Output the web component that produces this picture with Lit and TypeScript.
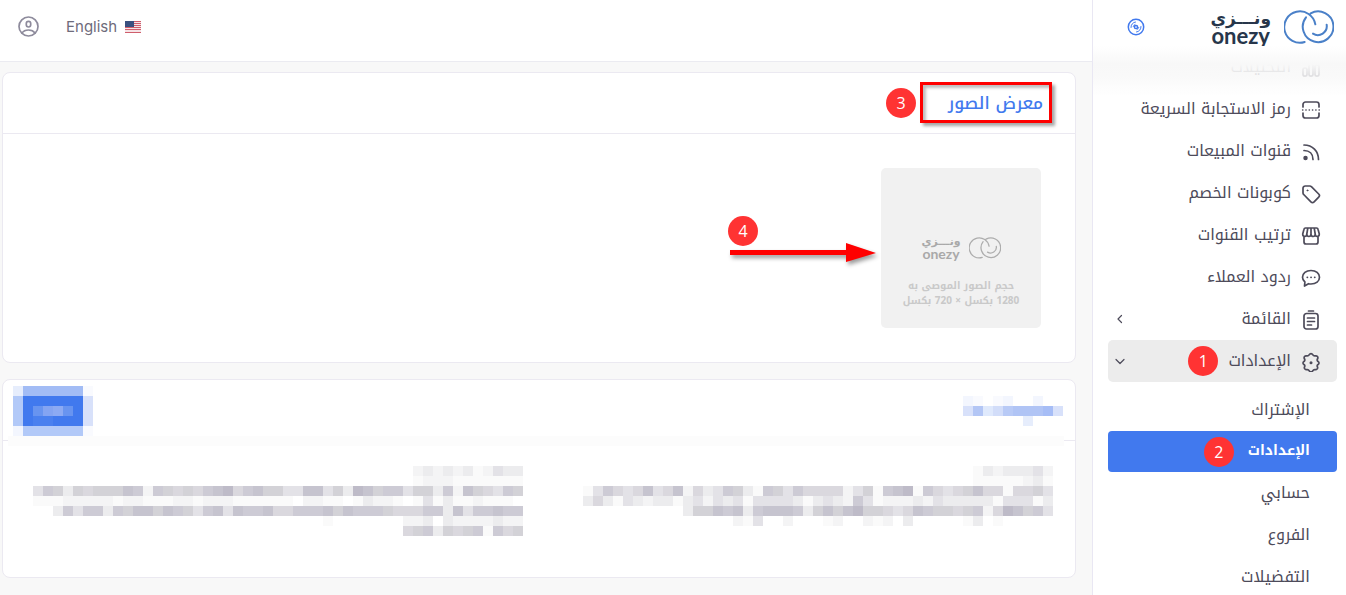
import { LitElement, html, svg, css } from "lit";
import { customElement, property } from "lit/decorators.js";

const GREYS: Record<string, string> = {
  "1": "#fafafa",
  "2": "#f4f4f5",
  "3": "#ececee",
  "4": "#e3e2e7",
  "5": "#dad8de",
  "6": "#d3d2d7",
  "7": "#cdcbd5",
  "8": "#c6c4cf",
  "9": "#bebbc8",
};

const BLUES: Record<string, string> = {
  a: "#f3f6fe",
  b: "#f9fafe",
  c: "#d8e1fa",
  d: "#b3c6f5",
  e: "#dfe9fc",
  f: "#d2ddf9",
  g: "#b8caf6",
  h: "#b0c4f5",
  i: "#a6bdf6",
  j: "#e6edfc",
  k: "#a2bcf5",
  l: "#b2c9f8",
  m: "#4179ee",
  n: "#6894f0",
  o: "#84a4f2",
  p: "#8caaf3",
  q: "#4a80ef",
};

const TITLE_CELLS = ["ab.ba..a..", "cdefghhhic", "......j..."];
const BUTTON_CELLS = ["jkkkkkkb", "lmmmmmmc", "lmnopnmc", "lmqqmmmc", "allllllb"];

const RIGHT_CELLS = [
  ".......................................13233342",
  ".......................................11111231",
  "14754584582534763176475555246178917545685515564",
  "35314323313424341444431343274122232433333144413",
  "..........3668783788873686896654587665672598674",
  "...............214..2...12..212.3.....13.1.....",
];

const LEFT_CELLS = [
  "......................................23232312433",
  "......................................12221111111",
  "4763656668727656578957866448846398677466372865476",
  "11122222122111221222111111.2211.13221.1413112111",
  "..37477376886876478487785577786877765557738477877",
  ".............................1.......223.32222322",
  ".....................................567365671756",
];

type IconName = keyof typeof ICONS;

const ICONS = {
  chart: svg`<rect x="2" y="10" width="4" height="8" rx="1.500"/><rect x="8" y="4" width="4" height="14" rx="1.500"/><rect x="14" y="7" width="4" height="11" rx="1.500"/>`,
  scan: svg`<path d="M2 7V4.500a2.500 2.500 0 0 1 2.500-2.500h11a2.500 2.500 0 0 1 2.500 2.500V7M2 13v2.500a2.500 2.500 0 0 0 2.500 2.500h11a2.500 2.500 0 0 0 2.500-2.500V13"/><path d="M1.500 10h17" stroke-width="1.300" stroke-dasharray=".4 2.900"/>`,
  feed: svg`<path d="M3 3c8.500 0 14.500 6 14.500 14.500M3 8.500c5.500 0 9 3.500 9 9"/><circle cx="4.500" cy="16" r="1.400" fill="currentColor"/>`,
  tag: svg`<path d="M2 4.200A2.200 2.200 0 0 1 4.200 2h4.600c.6 0 1.200.2 1.600.7l7.300 7.300c.9.900.9 2.300 0 3.200l-4.600 4.600c-.9.900-2.300.9-3.200 0L2.700 10.500c-.5-.4-.7-1-.7-1.600z"/><circle cx="6.400" cy="6.400" r=".5" fill="currentColor" stroke-width="1"/>`,
  store: svg`<path d="M3 10v6a2 2 0 0 0 2 2h10a2 2 0 0 0 2-2v-6M4.500 2h11a1.500 1.500 0 0 1 1.500 1.200l1.300 4.800c0 3.300-4.100 3.300-4.100 0 0 3.300-4.200 3.300-4.200 0 0 3.300-4.200 3.300-4.200 0 0 3.300-4.100 3.300-4.100 0L3 3.200A1.500 1.500 0 0 1 4.500 2zM5.800 8 6.800 2M10 8V2M14.200 8 13.200 2"/>`,
  chat: svg`<path d="M10 2.500c5 0 8.500 2.900 8.500 6.800S15 16 10 16c-.9 0-1.700-.1-2.500-.3L3.500 18l.4-4C2.400 12.800 1.500 11.200 1.500 9.300c0-3.900 3.500-6.800 8.500-6.800z"/><path d="M6.300 9.300h.1M10 9.300h.1M13.700 9.300h.1" stroke-width="1.800"/>`,
  list: svg`<rect x="3" y="3.500" width="14" height="15.500" rx="2.500"/><path d="M7.500 1h5M6.500 8h7M6.500 11.500h7M6.500 15h4"/>`,
  gear: svg`<path d="M8.300 2.600a1.900 1.900 0 0 1 3.400 0c.5 1 1.500 1.500 2.600 1.300a2 2 0 0 1 2.300 2.900c-.6.900-.5 1.700 0 2.300.4.500 1.400.5 1.400 1.900s-1 1.400-1.400 1.900c-.5.600-.6 1.400 0 2.300a2 2 0 0 1-2.300 2.400c-1.100-.2-2.100.3-2.600 1.200a1.900 1.900 0 0 1-3.400 0c-.5-.9-1.500-1.400-2.600-1.200a2 2 0 0 1-2.300-2.400c.6-.9.5-1.700 0-2.300C3 12.400 2 12.400 2 11s1-1.400 1.400-1.900c.5-.6.6-1.400 0-2.300a2 2 0 0 1 2.300-2.900c1.100.2 2.100-.3 2.600-1.300z"/><circle cx="10" cy="10.800" r="1.500" fill="currentColor" stroke="none"/>`,
};

@customElement("pixel-block")
class PixelBlock extends LitElement {
  @property({ attribute: false }) rows: string[] = [];

  static styles = css`
    :host {
      display: block;
      line-height: 0;
    }
  `;

  render() {
    const w = this.rows[0]?.length ?? 0;
    return html`<svg
      width=${w * 10}
      height=${this.rows.length * 10}
      shape-rendering="crispEdges"
      aria-hidden="true"
    >
      ${this.rows.map((row, y) =>
        [...row].map((c, x) => {
          const fill = GREYS[c] ?? BLUES[c];
          return fill
            ? svg`<rect x=${x * 10} y=${y * 10} width="10" height="10" fill=${fill} />`
            : null;
        })
      )}
    </svg>`;
  }
}

@customElement("onezy-logo")
class OnezyLogo extends LitElement {
  static styles = css`
    :host {
      display: flex;
      direction: rtl;
      align-items: center;
      gap: 13px;
      color: #27364b;
      --mark: #4a80c8;
      --mark-width: 50px;
      --ar: 17px;
      --en: 22px;
      --line: 18px;
    }
    :host([small]) {
      gap: 8px;
      color: #a9a9a9;
      --mark: #adadad;
      --mark-width: 32px;
      --ar: 11px;
      --en: 14px;
      --line: 12px;
    }
    .mark {
      width: var(--mark-width);
      fill: none;
      stroke: var(--mark);
      stroke-width: 6;
      stroke-linecap: round;
    }
    .words {
      display: flex;
      flex-direction: column;
      align-items: center;
      line-height: var(--line);
    }
    .ar {
      font-family: "DejaVu Sans", sans-serif;
      font-size: var(--ar);
      font-weight: 700;
    }
    .en {
      font-family: Lato, sans-serif;
      font-size: var(--en);
      font-weight: 700;
    }
  `;

  render() {
    return html`<svg class="mark" viewBox="0 0 150 102" aria-hidden="true">
        <path d="M94 43A47 47 0 1 0 62 96M66 22A46 46 0 1 0 80 10M128 44A27 27 0 0 1 87 71" />
      </svg>
      <span class="words"><span class="ar">ونـــزي</span><span class="en">onezy</span></span>`;
  }
}

const MENU: { icon: IconName; label: string; arrow?: "closed" | "open"; badge?: string }[] = [
  { icon: "chart", label: "التحليلات" },
  { icon: "scan", label: "رمز الاستجابة السريعة" },
  { icon: "feed", label: "قنوات المبيعات" },
  { icon: "tag", label: "كوبونات الخصم" },
  { icon: "store", label: "ترتيب القنوات" },
  { icon: "chat", label: "ردود العملاء" },
  { icon: "list", label: "القائمة", arrow: "closed" },
  { icon: "gear", label: "الإعدادات", arrow: "open", badge: "1" },
];

const SUBMENU: { label: string; badge?: string }[] = [
  { label: "الإشتراك" },
  { label: "الإعدادات", badge: "2" },
  { label: "حسابي" },
  { label: "الفروع" },
  { label: "التفضيلات" },
];

@customElement("app-root")
class AppRoot extends LitElement {
  static styles = css`
    :host {
      display: flex;
      direction: rtl;
      height: 100vh;
      overflow: hidden;
      background: #f8f8f8;
      color: #4d4b5a;
      font-family: "Noto Kufi Arabic", "DejaVu Sans", sans-serif;
      font-size: 16px;
    }
    * {
      box-sizing: border-box;
    }
    a {
      color: inherit;
      text-decoration: none;
    }
    button {
      border: 0;
      padding: 0;
      background: none;
      color: inherit;
      font: inherit;
      cursor: pointer;
    }
    .icon {
      display: block;
      flex: none;
      fill: none;
      stroke: currentColor;
      stroke-width: 1.7;
      stroke-linecap: round;
      stroke-linejoin: round;
    }
    .badge {
      display: grid;
      place-items: center;
      flex: none;
      width: 30px;
      height: 30px;
      border-radius: 50%;
      background: #ff3333;
      color: #fff;
      font: 16px "Open Sans", sans-serif;
    }

    .sidebar {
      flex: none;
      width: 254px;
      border-left: 1px solid #e9e7f3;
      background: #fff;
      overflow: hidden;
    }
    .brand {
      position: relative;
      display: flex;
      align-items: center;
      justify-content: space-between;
      height: 46px;
      padding: 8px 12px 0 34px;
    }
    .brand::after {
      content: "";
      position: absolute;
      top: 46px;
      left: 0;
      right: 0;
      height: 50px;
      background: linear-gradient(
        #fff 0,
        #fbfbfb 10px,
        #f8f8f8 18px,
        rgba(248, 248, 248, 0.85) 30px,
        rgba(255, 255, 255, 0)
      );
      pointer-events: none;
    }
    .pin {
      color: #4179ee;
    }
    .menu {
      display: flex;
      flex-direction: column;
      padding: 0 9px 0 15px;
    }
    .item {
      display: flex;
      align-items: center;
      gap: 10px;
      width: 100%;
      height: 42px;
      padding: 0 16px 0 6px;
      border-radius: 5px;
      text-align: right;
    }
    .label {
      padding-bottom: 2px;
    }
    .item .icon {
      margin-top: 2px;
    }
    .item .chevron {
      margin: 0 auto 0 0;
    }
    .item.open {
      background: #ececec;
    }
    .submenu {
      display: flex;
      flex-direction: column;
      padding-top: 7px;
    }
    .sub {
      display: flex;
      align-items: center;
      gap: 14px;
      height: 42px;
      padding: 0 27px;
      border-radius: 4px;
    }
    .sub.active {
      height: 41px;
      background: #4179ee;
      color: #fff;
      font-size: 14px;
      font-weight: 700;
    }

    .main {
      flex: 1;
      min-width: 0;
    }
    .topbar {
      display: flex;
      align-items: center;
      justify-content: flex-end;
      gap: 27px;
      height: 62px;
      padding: 0 18px 8px;
      border-bottom: 1px solid #ebebf1;
      background: #fff;
    }
    .lang {
      display: flex;
      align-items: center;
      gap: 8px;
      color: #6e6b7b;
      font: 15px Inter, sans-serif;
    }
    .profile {
      color: #8e8b9c;
    }
    .content {
      display: flex;
      flex-direction: column;
      gap: 16px;
      padding: 10px 16px 17px 2px;
    }
    .card {
      border: 1px solid #ebe9f1;
      border-radius: 8px;
      background: #fff;
    }
    .card-head {
      position: relative;
      display: flex;
      align-items: center;
      justify-content: space-between;
      height: 61px;
      border-bottom: 1px solid #ebe9f1;
    }
    .gallery-head {
      justify-content: flex-start;
      gap: 4px;
      padding: 0 23px 1px;
    }
    .framed {
      display: flex;
      align-items: center;
      width: 132px;
      height: 41px;
      margin: 0;
      padding-right: 6px;
      border: 3px solid #f00;
      box-shadow: 3px 3px 3px rgba(0, 0, 0, 0.35), inset 3px 3px 3px rgba(0, 0, 0, 0.25);
      color: #4179ee;
      font-size: 17px;
      font-weight: 500;
    }
    .gallery {
      position: relative;
      padding: 34px;
    }
    .upload {
      display: flex;
      flex-direction: column;
      align-items: center;
      justify-content: flex-end;
      gap: 18px;
      width: 160px;
      height: 160px;
      padding-bottom: 20px;
      border-radius: 5px;
      background: #f1f1f1;
    }
    .hint {
      color: #c9c9c9;
      font-size: 10px;
      font-weight: 700;
      line-height: 15px;
      text-align: center;
      white-space: nowrap;
    }
    .pointer {
      position: absolute;
      right: 195px;
      top: 82px;
      direction: ltr;
    }
    .pointer svg {
      display: block;
      margin: -4px 0 0 2px;
      filter: drop-shadow(2px 3px 2px rgba(0, 0, 0, 0.4));
    }
    .settings-head {
      padding: 2px 12px 0 10px;
    }
    .settings-head::after {
      content: "";
      position: absolute;
      right: 11px;
      left: 5px;
      bottom: -6px;
      height: 10px;
      background: #fcfcfc;
    }
    .columns {
      display: flex;
      justify-content: space-between;
      padding: 25px 22px 41px 30px;
    }
  `;

  private menuItem(m: (typeof MENU)[number]) {
    const inner = html`<svg class="icon" width="20" height="20" viewBox="0 0 20 20" aria-hidden="true">
        ${ICONS[m.icon]}
      </svg>
      <span class="label">${m.label}</span>
      ${m.badge ? html`<span class="badge">${m.badge}</span>` : null}
      ${m.arrow
        ? html`<svg class="icon chevron" width="12" height="12" viewBox="0 0 12 12" aria-hidden="true">
            <path stroke-width="1.200" d=${m.arrow === "open" ? "M2 4.500 6 8.500 10 4.500" : "M7.500 2.500 4 6 7.500 9.500"} />
          </svg>`
        : null}`;
    return m.arrow
      ? html`<button
          type="button"
          class="item ${m.arrow === "open" ? "open" : ""}"
          aria-expanded=${m.arrow === "open"}
        >
          ${inner}
        </button>`
      : html`<a class="item" href="#">${inner}</a>`;
  }

  render() {
    return html`
      <aside class="sidebar">
        <div class="brand">
          <onezy-logo></onezy-logo>
          <button class="pin" type="button" aria-label="تثبيت القائمة">
            <svg class="icon" width="18" height="18" viewBox="0 0 18 18">
              <circle cx="9" cy="9" r="7.700" stroke-width="1.500" />
              <circle cx="9" cy="9" r="1.600" stroke-width="1.500" />
              <path d="M4 9.500A5 5 0 0 1 8.500 4M6.200 8.500a3 3 0 0 1 1.800-2M14 8.500A5 5 0 0 1 9.500 14M11.800 9.500a3 3 0 0 1-1.800 2" stroke-width="1" />
            </svg>
          </button>
        </div>
        <nav class="menu">
          ${MENU.map((m) => this.menuItem(m))}
          <div class="submenu">
            ${SUBMENU.map(
              (s) => html`<a class="sub ${s.badge ? "active" : ""}" href="#"
                ><span class="label">${s.label}</span>${s.badge ? html`<span class="badge">${s.badge}</span>` : null}</a
              >`
            )}
          </div>
        </nav>
      </aside>

      <div class="main">
        <header class="topbar">
          <a class="lang" href="#" dir="ltr">
            <span>English</span>
            <svg width="16" height="12" viewBox="0 0 16 12" shape-rendering="crispEdges" aria-hidden="true">
              <rect width="16" height="12" fill="#f6e3e6" />
              <path d="M0 .5h16M0 2.500h16M0 4.500h16M0 6.500h16M0 8.500h16M0 11.500h16" stroke="#cf5e6c" />
              <rect width="9" height="6" fill="#39507f" />
            </svg>
          </a>
          <button class="profile" type="button" aria-label="الحساب">
            <svg class="icon" width="21" height="21" viewBox="0 0 21 21">
              <circle cx="10.500" cy="10.500" r="9.500" />
              <rect x="8.300" y="5.300" width="4.400" height="5.700" rx="2.200" />
              <path d="M4 17c1.500-2.200 3.800-3 6.500-3s5 .8 6.500 3" />
            </svg>
          </button>
        </header>

        <main class="content">
          <section class="card">
            <div class="card-head gallery-head">
              <h2 class="framed">معرض الصور</h2>
              <span class="badge">3</span>
            </div>
            <div class="gallery">
              <button class="upload" type="button">
                <onezy-logo small></onezy-logo>
                <span class="hint">حجم الصور الموصى به<br />1280 بكسل × 720 بكسل</span>
              </button>
              <div class="pointer">
                <span class="badge">4</span>
                <svg width="150" height="26" viewBox="0 0 150 26" aria-hidden="true">
                  <path d="M0 8h116V1l30 10-30 9v-7H0z" fill="#f00" />
                </svg>
              </div>
            </div>
          </section>

          <section class="card">
            <div class="card-head settings-head">
              <pixel-block .rows=${TITLE_CELLS}></pixel-block>
              <button type="button" aria-label="حفظ">
                <pixel-block .rows=${BUTTON_CELLS}></pixel-block>
              </button>
            </div>
            <div class="columns">
              <pixel-block .rows=${RIGHT_CELLS}></pixel-block>
              <pixel-block .rows=${LEFT_CELLS}></pixel-block>
            </div>
          </section>
        </main>
      </div>
    `;
  }
}
